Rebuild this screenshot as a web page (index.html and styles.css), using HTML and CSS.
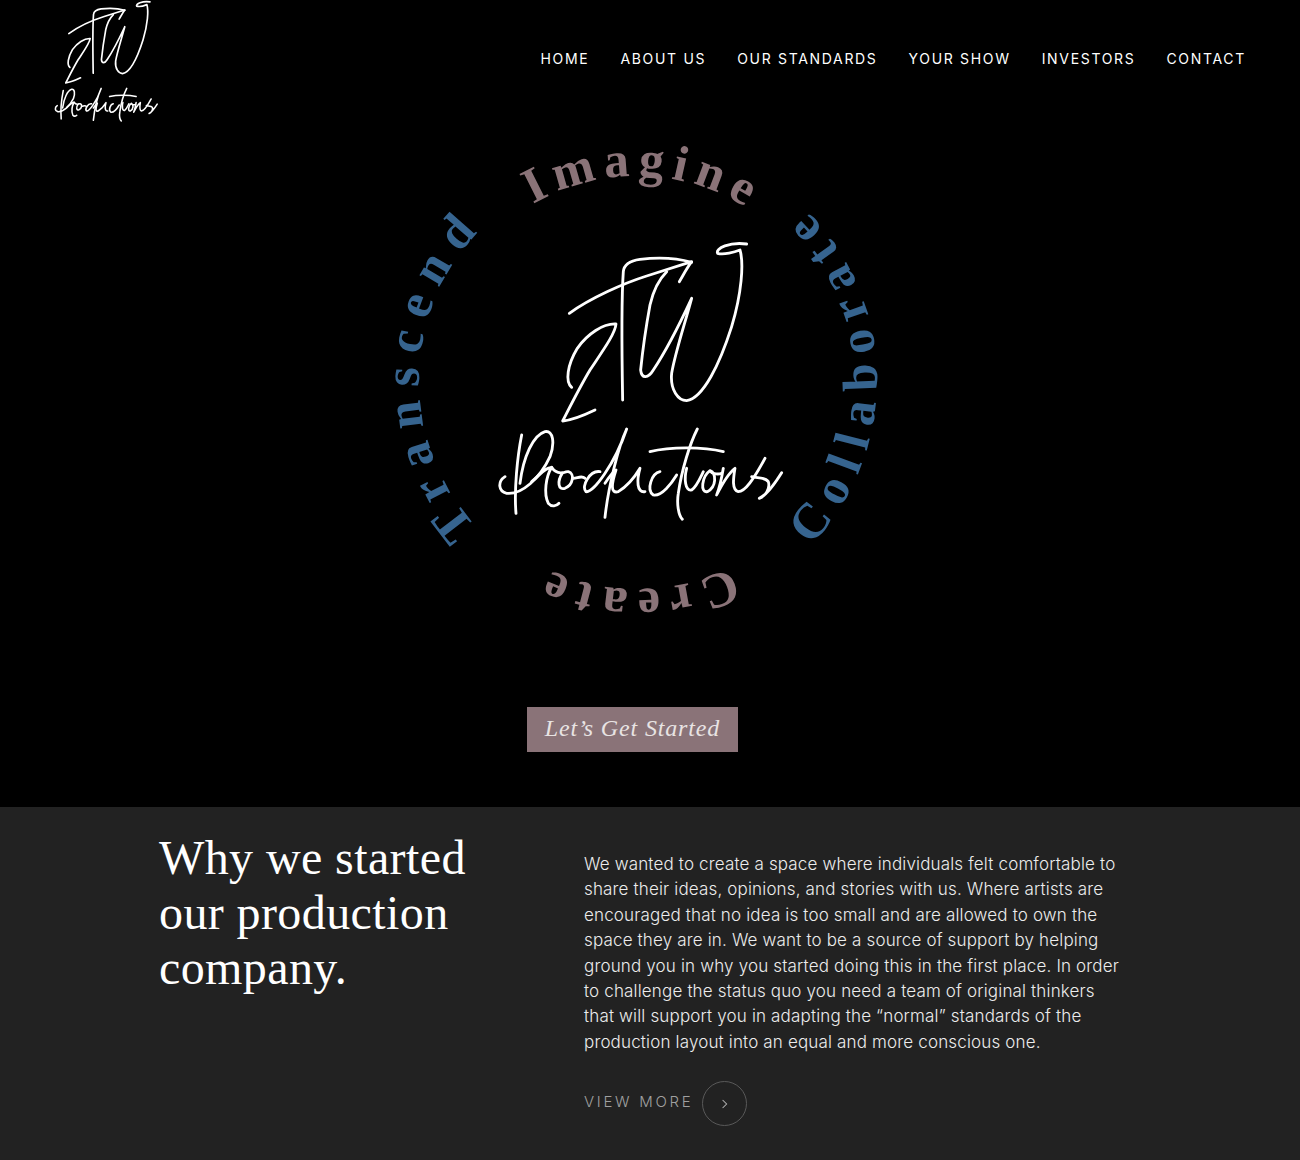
FILE: index.html
```html
<!DOCTYPE html>
<html lang="en">
<head>
<meta charset="utf-8">
<title>2TW Productions</title>
<link rel="stylesheet" href="styles.css">
</head>
<body>
<svg class="defs" width="0" height="0" aria-hidden="true">
  <defs>
    <g id="tw" class="ink">
      <path d="M238 250C300 205 400 160 470 138C520 122 565 108 605 95C590 115 580 135 568 155"/>
      <path d="M398 510C396 400 394 210 400 125C402 102 420 92 450 88C500 82 560 84 605 97"/>
      <path d="M245 472C225 455 232 405 262 355C292 312 340 280 378 282C376 310 340 360 300 420C270 470 235 540 218 573C250 570 290 552 315 540"/>
      <path d="M530 125C505 150 490 180 480 225C470 280 458 360 452 420C455 448 475 445 490 420C530 360 570 280 605 205C585 280 555 370 545 430C540 480 565 512 590 512C640 505 690 400 725 290C755 190 762 100 750 60C735 66 700 76 683 70C675 55 720 35 770 42"/>
    </g>
    <g id="prod" class="ink">
      <path d="M78 850C72 780 82 680 95 615"/>
      <path d="M45 740C22 755 25 785 50 790C95 795 150 745 180 680C195 640 190 600 165 605C130 615 100 680 90 760"/>
      <path d="M125 755C150 735 165 712 185 712C168 740 160 790 175 820C185 832 200 828 207 820"/>
      <path d="M185 712C195 728 205 730 218 728C200 755 205 782 225 775C250 765 255 730 235 725C225 724 220 730 218 728"/>
      <path d="M250 745C262 745 275 735 285 745"/>
      <path d="M330 725C300 720 272 770 288 785C310 790 375 700 410 597C385 650 355 770 345 862"/>
      <path d="M345 760C355 745 365 730 378 720C365 760 360 792 385 785C410 770 432 745 450 715C440 750 440 790 465 785"/>
      <path d="M510 725C485 730 468 780 490 795C515 800 545 760 560 735"/>
      <path d="M480 665C540 650 640 650 700 665"/>
      <path d="M622 597C600 640 575 720 565 790C560 820 565 855 577 868"/>
      <path d="M590 715C582 745 585 785 605 780C620 770 630 745 640 725"/>
      <path d="M660 722C635 740 630 790 652 785C680 770 680 730 660 722C665 730 680 735 695 730"/>
      <path d="M700 715C695 745 690 770 680 795C695 765 715 730 735 715C730 745 725 780 745 785C765 785 790 750 825 685"/>
      <path d="M785 740C800 745 825 740 835 755C842 775 825 800 808 805C830 795 855 760 875 728"/>
    </g>
  </defs>
</svg>

<header class="top">
  <a class="brand" href="#" aria-label="2TW Productions">
    <svg class="brand-tw" viewBox="200 30 590 550"><use href="#tw"/></svg>
    <svg class="brand-prod" viewBox="10 590 880 290"><use href="#prod"/></svg>
  </a>
  <nav class="menu">
    <a href="#">HOME</a>
    <a href="#">ABOUT US</a>
    <a href="#">OUR STANDARDS</a>
    <a href="#">YOUR SHOW</a>
    <a href="#">INVESTORS</a>
    <a href="#">CONTACT</a>
  </nav>
</header>

<section class="hero">
  <svg class="ring" viewBox="0 0 510 500" width="510" height="500">
    <defs>
      <path id="arc-top" d="M53 250A204 204 0 0 1 461 250"/>
      <path id="arc-left" d="M254 465A215 215 0 0 1 254 35"/>
      <path id="arc-bottom" d="M466 250A209 209 0 0 1 48 250"/>
      <path id="arc-right" d="M257 490A240 240 0 0 0 257 10"/>
    </defs>
    <text class="word word-rose word-imagine"><textPath href="#arc-top" startOffset="51%">Imagine</textPath></text>
    <text class="word word-blue word-transcend"><textPath href="#arc-left" startOffset="51%">Transcend</textPath></text>
    <text class="word word-rose word-create"><textPath href="#arc-bottom" startOffset="50%">Create</textPath></text>
    <text class="word word-blue word-collaborate"><textPath href="#arc-right" startOffset="51%">Collaborate</textPath></text>
    <g class="ring-logo">
      <use href="#tw"/>
      <use href="#prod"/>
    </g>
  </svg>
  <a class="cta" href="#">Let’s Get Started</a>
</section>

<section class="why">
  <h2 class="why-title">Why we started<br>our production<br>company.</h2>
  <div class="why-body">
    <p class="why-text">We wanted to create a space where individuals felt comfortable to share their ideas, opinions, and stories with us. Where artists are encouraged that no idea is too small and are allowed to own the space they are in. We want to be a source of support by helping ground you in why you started doing this in the first place. In order to challenge the status quo you need a team of original thinkers that will support you in adapting the “normal” standards of the production layout into an equal and more conscious one.</p>
    <a class="more" href="#">
      <span class="more-label">VIEW MORE</span>
      <span class="more-circle">
        <svg viewBox="0 0 10 12" width="8" height="10"><path d="M2 1l5 5-5 5"/></svg>
      </span>
    </a>
  </div>
</section>
</body>
</html>
```
FILE: styles.css
```css
* { box-sizing: border-box; }
html, body { margin: 0; padding: 0; }
body {
  background: #000;
  color: #fff;
  height: 1160px;
  overflow: hidden;
  font-family: "Inter", "Liberation Sans", sans-serif;
}
a { color: inherit; text-decoration: none; }
.defs { display: block; height: 0; }
.ink {
  fill: none;
  stroke: #fff;
  stroke-linecap: round;
  stroke-linejoin: round;
}
.top {
  height: 116px;
  display: flex;
  align-items: center;
  justify-content: space-between;
  padding: 0 54px 0 53px;
}
.brand {
  width: 106px;
  display: flex;
  flex-direction: column;
  align-items: center;
  margin-top: -3px;
  align-self: flex-start;
}
.brand-tw { width: 90px; height: 90px; display: block; flex: none; margin-left: 4px; stroke-width: 11; }
.brand-prod { width: 106px; height: 36px; display: block; flex: none; stroke-width: 13; }
.menu { display: flex; gap: 31px; font-size: 14px; letter-spacing: 1.68px; }
.hero {
  height: 691px;
  padding: 14px 0 0 380px;
  display: flex;
  flex-direction: column;
  align-items: flex-start;
}
.ring { display: block; flex: none; overflow: visible; }
.ring-logo { transform: translate(110px, 100px) scale(.3333); stroke-width: 8.5; }
.word { font-family: "Liberation Serif", serif; font-weight: 700; font-size: 50px; text-anchor: middle; }
.word-rose { fill: #8a7378; }
.word-blue { fill: #36648f; }
.word-imagine { letter-spacing: 8px; }
.word-transcend { letter-spacing: 12.5px; }
.word-create { letter-spacing: 8.5px; }
.word-collaborate { letter-spacing: 11.5px; }
.cta {
  margin: 77px 0 0 147px;
  width: 211px;
  height: 45px;
  padding-bottom: 3px;
  background: #8a7378;
  display: flex;
  align-items: center;
  justify-content: center;
  font-family: "Liberation Serif", serif;
  font-style: italic;
  font-size: 24px;
  letter-spacing: .85px;
  color: #e8e3e3;
}
.why {
  background: #222;
  height: 353px;
  padding: 23px 0 0 159px;
  display: grid;
  grid-template-columns: 425px 540px;
}
.why-title {
  margin: 0;
  font-family: "Liberation Serif", serif;
  font-weight: 400;
  font-size: 48px;
  letter-spacing: .4px;
  line-height: 55px;
}
.why-body { padding-top: 22px; }
.why-text {
  margin: 0;
  font-size: 17px;
  font-weight: 300;
  letter-spacing: .16px;
  line-height: 25.4px;
  color: #ececec;
}
.more { display: flex; align-items: center; gap: 9px; margin-top: 26px; }
.more-label { font-size: 15px; letter-spacing: 2.7px; color: #a0a0a0; font-weight: 300; margin-top: -4px; }
.more-circle {
  width: 45px;
  height: 45px;
  border: 1px solid #595959;
  border-radius: 50%;
  display: flex;
  align-items: center;
  justify-content: center;
}
.more-circle path { fill: none; stroke: #b5b5b5; stroke-width: 1.3; }
```
